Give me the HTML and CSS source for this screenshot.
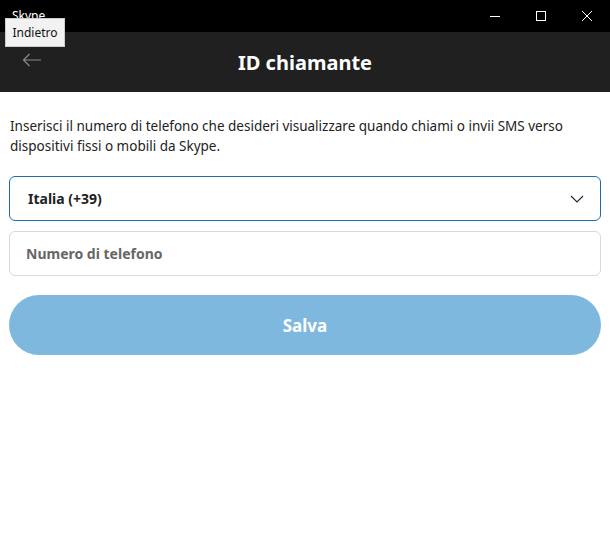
FILE: index.html
```html
<!DOCTYPE html>
<html lang="it">
<head>
    <meta charset="utf-8">
    <title>Skype</title>
    <link rel="stylesheet" href="styles.css">
</head>
<body>
    <div class="titlebar">
        <span class="app-name">Skype</span>
        <div class="win-controls">
            <span class="win-btn">
                <svg width="12" height="12" viewBox="0 0 12 12"><path d="M1 6.5h10" stroke="#fff" stroke-width="1"/></svg>
            </span>
            <span class="win-btn">
                <svg width="12" height="12" viewBox="0 0 12 12"><rect x="1.5" y="1.5" width="9" height="9" fill="none" stroke="#fff" stroke-width="1"/></svg>
            </span>
            <span class="win-btn">
                <svg width="12" height="12" viewBox="0 0 12 12"><path d="M1 1l10 10M11 1L1 11" stroke="#fff" stroke-width="1"/></svg>
            </span>
        </div>
    </div>
    <div class="header">
        <span class="back-btn">
            <svg width="20" height="14" viewBox="0 0 20 14"><path d="M19 7H1.5M7.5 1L1.5 7l6 6" fill="none" stroke="#8a8a8a" stroke-width="1.2"/></svg>
        </span>
        <h1 class="page-title">ID chiamante</h1>
        <span class="spacer"></span>
    </div>
    <div class="tooltip">Indietro</div>

    <div class="content">
        <p class="intro">Inserisci il numero di telefono che desideri visualizzare quando chiami o invii SMS verso dispositivi fissi o mobili da Skype.</p>
        <div class="field select-field">
            <span>Italia (+39)</span>
            <svg width="14" height="8" viewBox="0 0 14 8"><path d="M1 1l6 6 6-6" fill="none" stroke="#222" stroke-width="1.1"/></svg>
        </div>
        <div class="field input-field">
            <span class="placeholder">Numero di telefono</span>
        </div>
        <button class="save-btn">Salva</button>
    </div>
</body>
</html>
```

FILE: styles.css
```css
body {
    margin: 0;
    background-color: #fff;
    font-family: "Noto Sans", "Open Sans", sans-serif;
    color: #222;
    width: 610px;
    height: 560px;
    position: relative;
}
.titlebar {
    height: 32px;
    background-color: #000;
    color: #fff;
    display: flex;
    align-items: center;
    justify-content: space-between;
}
.app-name {
    font-size: 12px;
    margin-left: 12px;
    margin-top: -2px;
}
.win-controls {
    display: flex;
}
.win-btn {
    width: 46px;
    height: 32px;
    display: flex;
    align-items: center;
    justify-content: center;
}
.header {
    height: 60px;
    background-color: #202020;
    display: flex;
    align-items: center;
}
.back-btn {
    width: 64px;
    display: flex;
    justify-content: center;
    margin-top: -4px;
}
.spacer {
    width: 64px;
}
.page-title {
    flex: 1;
    margin: 0;
    text-align: center;
    color: #fff;
    font-size: 20px;
    font-weight: bold;
}
.tooltip {
    position: absolute;
    left: 5px;
    top: 18px;
    width: 58px;
    height: 27px;
    line-height: 27px;
    text-align: center;
    background-color: #f2f2f2;
    border: 1px solid #ccc;
    font-size: 12px;
    color: #111;
}
.content {
    padding: 0 9px;
}
.intro {
    margin: 24px 0 20px 1px;
    font-size: 13.5px;
    line-height: 20px;
}
.field {
    height: 43px;
    border: 1px solid #d9d9d9;
    border-radius: 6px;
    display: flex;
    align-items: center;
    justify-content: space-between;
    font-size: 14px;
    font-weight: bold;
}
.select-field {
    border-color: #1b6db0;
    padding: 0 16px 0 18px;
    margin-bottom: 10px;
}
.input-field {
    padding: 0 16px;
}
.placeholder {
    color: #666;
}
.save-btn {
    width: 100%;
    height: 60px;
    margin-top: 19px;
    border: none;
    border-radius: 30px;
    background-color: #7fb8de;
    color: #fff;
    font-family: inherit;
    font-size: 17px;
    font-weight: bold;
}
```
